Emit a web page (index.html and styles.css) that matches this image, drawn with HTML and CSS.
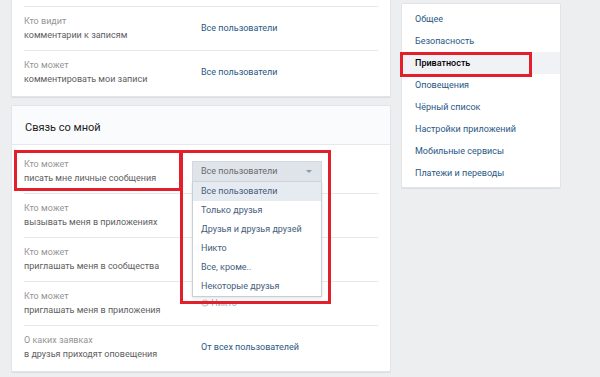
FILE: index.html
```html
<!DOCTYPE html>
<html>
<head>
    <meta charset="utf-8">
    <title>Настройки приватности</title>
    <link rel="stylesheet" href="styles.css">
</head>
<body>
<div class="page">
    <div class="main">
        <!-- верхний блок (прокручен) -->
        <div class="card card-top">
            <div class="row">
                <div class="label"><span class="l1">Кто видит</span><span class="l2">комментарии к записям</span></div>
                <div class="value"><a href="#">Все пользователи</a></div>
            </div>
            <div class="row">
                <div class="label"><span class="l1">Кто может</span><span class="l2">комментировать мои записи</span></div>
                <div class="value"><a href="#">Все пользователи</a></div>
            </div>
        </div>

        <!-- Связь со мной -->
        <div class="card">
            <div class="card-head">Связь со мной</div>
            <div class="rows">
                <div class="row row-first">
                    <div class="label"><span class="l1">Кто может</span><span class="l2">писать мне личные сообщения</span></div>
                    <div class="value">
                        <div class="select">
                            <span>Все пользователи</span>
                            <i class="arrow"></i>
                            <ul class="drop">
                                <li class="on">Все пользователи</li>
                                <li>Только друзья</li>
                                <li>Друзья и друзья друзей</li>
                                <li>Никто</li>
                                <li>Все, кроме..</li>
                                <li>Некоторые друзья</li>
                            </ul>
                        </div>
                    </div>
                    <div class="mark mark-label"></div>
                    <div class="mark mark-drop"></div>
                </div>
                <!-- значения строк 2 и 3 закрыты списком -->
                <div class="row">
                    <div class="label"><span class="l1">Кто может</span><span class="l2">вызывать меня в приложениях</span></div>
                    <div class="value"></div>
                </div>
                <div class="row">
                    <div class="label"><span class="l1">Кто может</span><span class="l2">приглашать меня в сообщества</span></div>
                    <div class="value"></div>
                </div>
                <div class="row">
                    <div class="label"><span class="l1">Кто может</span><span class="l2">приглашать меня в приложения</span></div>
                    <div class="value value-low"><a href="#" class="faded"><svg class="lock" width="8" height="8" viewBox="0 0 8 8"><circle cx="4" cy="4" r="3" fill="none" stroke="#b8c1cc" stroke-width="1.2"/></svg> Никто</a></div>
                </div>
                <div class="row">
                    <div class="label"><span class="l1">О каких заявках</span><span class="l2">в друзья приходят оповещения</span></div>
                    <div class="value"><a href="#">От всех пользователей</a></div>
                </div>
            </div>
        </div>
    </div>

    <div class="side">
        <ul class="card menu">
            <li><a href="#">Общее</a></li>
            <li><a href="#">Безопасность</a></li>
            <li class="active"><a href="#">Приватность</a><div class="mark mark-menu"></div></li>
            <li><a href="#">Оповещения</a></li>
            <li><a href="#">Чёрный список</a></li>
            <li><a href="#">Настройки приложений</a></li>
            <li><a href="#">Мобильные сервисы</a></li>
            <li><a href="#">Платежи и переводы</a></li>
        </ul>
    </div>
</div>
</body>
</html>
```

FILE: styles.css
```css
body,div,ul,li,a,span{margin: 0;padding: 0;}
ul,li{list-style: none;}
a{text-decoration: none;color: #2a5885;}

body{background: #edeef0;font-family: Roboto, "Noto Sans", "DejaVu Sans", sans-serif;font-size: 9px;color: #000;overflow: hidden;}

.page{display: flex;align-items: flex-start;gap: 10px;padding-left: 11px;}
.main{width: 380px;}
.side{width: 160px;margin-top: 3px;}

.card{background: #fff;border: 1px solid #e3e4e8;border-radius: 2px;box-shadow: 0 1px 0 #dcdde1;margin-bottom: 8px;}
.card-top{border-top: 0;border-radius: 0 0 2px 2px;padding: 6px 12px 2px;}

.card-head{background: #fafbfc;border-bottom: 1px solid #e7e8ec;padding: 14px 13px 8px;font-size: 11px;line-height: 16px;color: #222;}
.rows{padding: 0 12px 2px;}

.row{display: flex;align-items: center;border-top: 1px solid #e7e8ec;padding: 7px 0 8px;}
.row-first{position: relative;border-top: 0;padding-top: 12px;}
.label{width: 168px;flex-shrink: 0;line-height: 14px;}
.label span{display: block;white-space: nowrap;}
.l1{color: #959595;}
.l2{color: #606060;}
.value{padding-left: 9px;line-height: 14px;}
.row-first .value{padding-left: 0;}
.faded{color: #9aa8b8;}
.lock{vertical-align: -1px;}

.select{position: relative;width: 130px;height: 21px;box-sizing: border-box;background: #dfe4ea;border: 1px solid #d3d9de;padding-left: 8px;line-height: 19px;color: #6b6b6b;}
.arrow{position: absolute;right: 9px;top: 8px;width: 0;height: 0;border-left: 3px solid transparent;border-right: 3px solid transparent;border-top: 3px solid #8c9aab;}
.drop{position: absolute;left: -1px;top: 20px;width: 130px;box-sizing: border-box;background: #fff;border: 1px solid #c5d0db;border-top: 0;box-shadow: 0 1px 3px rgba(0,0,0,0.12);z-index: 5;}
.drop li{height: 19px;line-height: 19px;padding-left: 8px;color: #455d7a;white-space: nowrap;}
.drop .on{background: #e5ebf1;}

.mark{position: absolute;border: 3px solid #e2202b;box-sizing: border-box;z-index: 6;}
.mark-label{left: -10px;top: 5px;width: 168px;height: 41px;}
.mark-drop{left: 156px;top: 5px;width: 151px;height: 154px;}

.menu{padding: 4px 0 3px;margin-bottom: 0;}
.menu li{position: relative;height: 22px;line-height: 22px;padding-left: 13px;}
.menu .active{background: #f0f2f5;}
.menu .active a{color: #000;font-weight: 500;}
.mark-menu{left: -2px;top: 0;width: 132px;height: 25px;}
```
